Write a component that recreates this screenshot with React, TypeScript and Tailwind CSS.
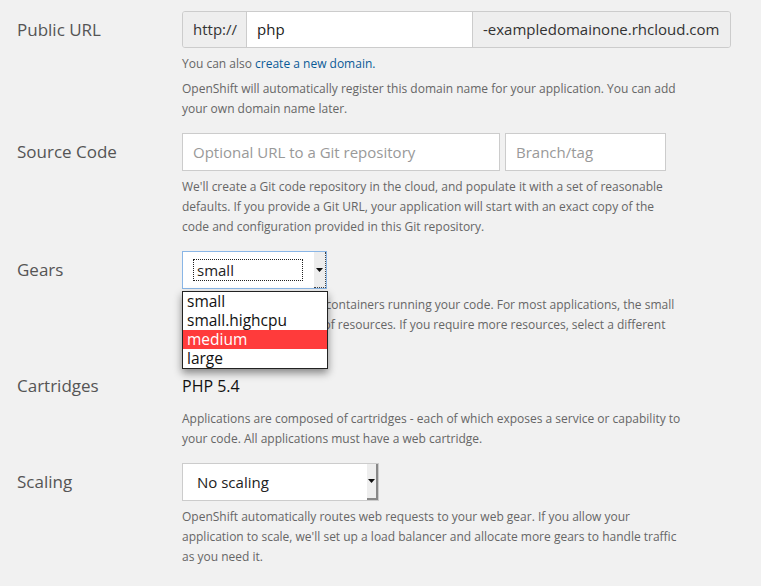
const FONT = { fontFamily: '"Open Sans", "Liberation Sans", sans-serif' };

function Label({ children, h = "h-[38px]" }: { children: React.ReactNode; h?: string }) {
  return (
    <div className={`w-[182px] shrink-0 pl-[17px] ${h} flex items-center text-[17px] text-[#555]`}>
      {children}
    </div>
  );
}

function Help({ lines, firstGap = false }: { lines: React.ReactNode[]; firstGap?: boolean }) {
  return (
    <div className="mt-[6px] text-[12px] leading-[20px] text-[#666]">
      {lines.map((line, i) => (
        <div key={i} className={i === 0 && firstGap ? "whitespace-nowrap mb-[5px]" : "whitespace-nowrap"}>
          {line}
        </div>
      ))}
    </div>
  );
}

function Caret() {
  return (
    <svg width="7" height="4" viewBox="0 0 7 4">
      <path d="M0 0 L7 0 L3.5 4 Z" fill="#111" />
    </svg>
  );
}

const GEAR_OPTIONS = ["small", "small.highcpu", "medium", "large"];

export default function App() {
  return (
    <div className="w-[761px] h-[586px] bg-[#f1f1f1] overflow-hidden pt-[11px]" style={FONT}>
      {/* Public URL */}
      <div className="flex mb-[14px]">
        <Label>Public URL</Label>
        <div>
          <div className="flex h-[37px] w-[549px] border border-[#cccccc] rounded-[3px] text-[15px] text-[#333] overflow-hidden whitespace-nowrap">
            <div className="bg-[#eeeeee] w-[64px] shrink-0 pl-[10px] flex items-center border-r border-[#cccccc]">
              http://
            </div>
            <div className="bg-white flex-1 px-[10px] flex items-center text-[#222]">php</div>
            <div className="bg-[#eeeeee] w-[258px] shrink-0 pl-[10px] flex items-center border-l border-[#cccccc]">
              -exampledomainone.rhcloud.com
            </div>
          </div>
          <Help
            firstGap
            lines={[
              <>
                You can also <span className="text-[#0a5a97]">create a new domain.</span>
              </>,
              "OpenShift will automatically register this domain name for your application. You can add",
              "your own domain name later.",
            ]}
          />
        </div>
      </div>

      {/* Source Code */}
      <div className="flex mb-[14px]">
        <Label>Source Code</Label>
        <div>
          <div className="flex gap-[5px] h-[38px] text-[15px] text-[#999]">
            <div className="w-[318px] bg-white border border-[#cccccc] px-[10px] flex items-center">
              Optional URL to a Git repository
            </div>
            <div className="w-[161px] bg-white border border-[#cccccc] px-[10px] flex items-center">Branch/tag</div>
          </div>
          <Help
            lines={[
              "We'll create a Git code repository in the cloud, and populate it with a set of reasonable",
              "defaults. If you provide a Git URL, your application will start with an exact copy of the",
              "code and configuration provided in this Git repository.",
            ]}
          />
        </div>
      </div>

      {/* Gears */}
      <div className="flex mb-[14px]">
        <Label>Gears</Label>
        <div className="relative">
          <div className="w-[145px] h-[38px] bg-white border border-[#8ab6e6] flex text-[15px] text-[#222]">
            <div className="flex-1 flex items-center pl-[10px] pr-[10px]">
              <div className="w-[110px] h-[22px] border border-dotted border-[#222] flex items-center pl-[3px] leading-none">
                small
              </div>
            </div>
            <div className="w-[12px] bg-[#ededed] border-r border-b border-dotted border-[#444] flex items-center justify-center">
              <Caret />
            </div>
          </div>
          <div className="absolute left-0 top-[40px] w-[146px] bg-white border border-[#222] shadow-[0_4px_8px_rgba(0,0,0,0.45)] z-10 text-[15.5px] leading-[19px] text-[#111]">
            {GEAR_OPTIONS.map((opt) => (
              <div key={opt} className={opt === "medium" ? "pl-[4px] bg-[#ff3b3b] text-white" : "pl-[4px]"}>
                {opt}
              </div>
            ))}
          </div>
          <Help
            lines={[
              "Gears are the application containers running your code. For most applications, the small",
              "gear size provides plenty of resources. If you require more resources, select a different",
              "gear size.",
            ]}
          />
        </div>
      </div>

      {/* Cartridges */}
      <div className="flex mb-[14px]">
        <Label h="h-[34px]">Cartridges</Label>
        <div>
          <div className="h-[34px] flex items-center text-[16px] text-[#111]">PHP 5.4</div>
          <Help
            lines={[
              "Applications are composed of cartridges - each of which exposes a service or capability to",
              "your code. All applications must have a web cartridge.",
            ]}
          />
        </div>
      </div>

      {/* Scaling */}
      <div className="flex">
        <Label>Scaling</Label>
        <div>
          <div className="w-[197px] h-[38px] bg-white border border-[#cccccc] flex text-[15px] text-[#222]">
            <div className="flex-1 flex items-center pl-[14px]">No scaling</div>
            <div className="w-[11px] bg-[#eeeeee] border-r-2 border-b-2 border-[#888] flex items-center justify-center">
              <Caret />
            </div>
          </div>
          <Help
            lines={[
              "OpenShift automatically routes web requests to your web gear. If you allow your",
              "application to scale, we'll set up a load balancer and allocate more gears to handle traffic",
              "as you need it.",
            ]}
          />
        </div>
      </div>
    </div>
  );
}
